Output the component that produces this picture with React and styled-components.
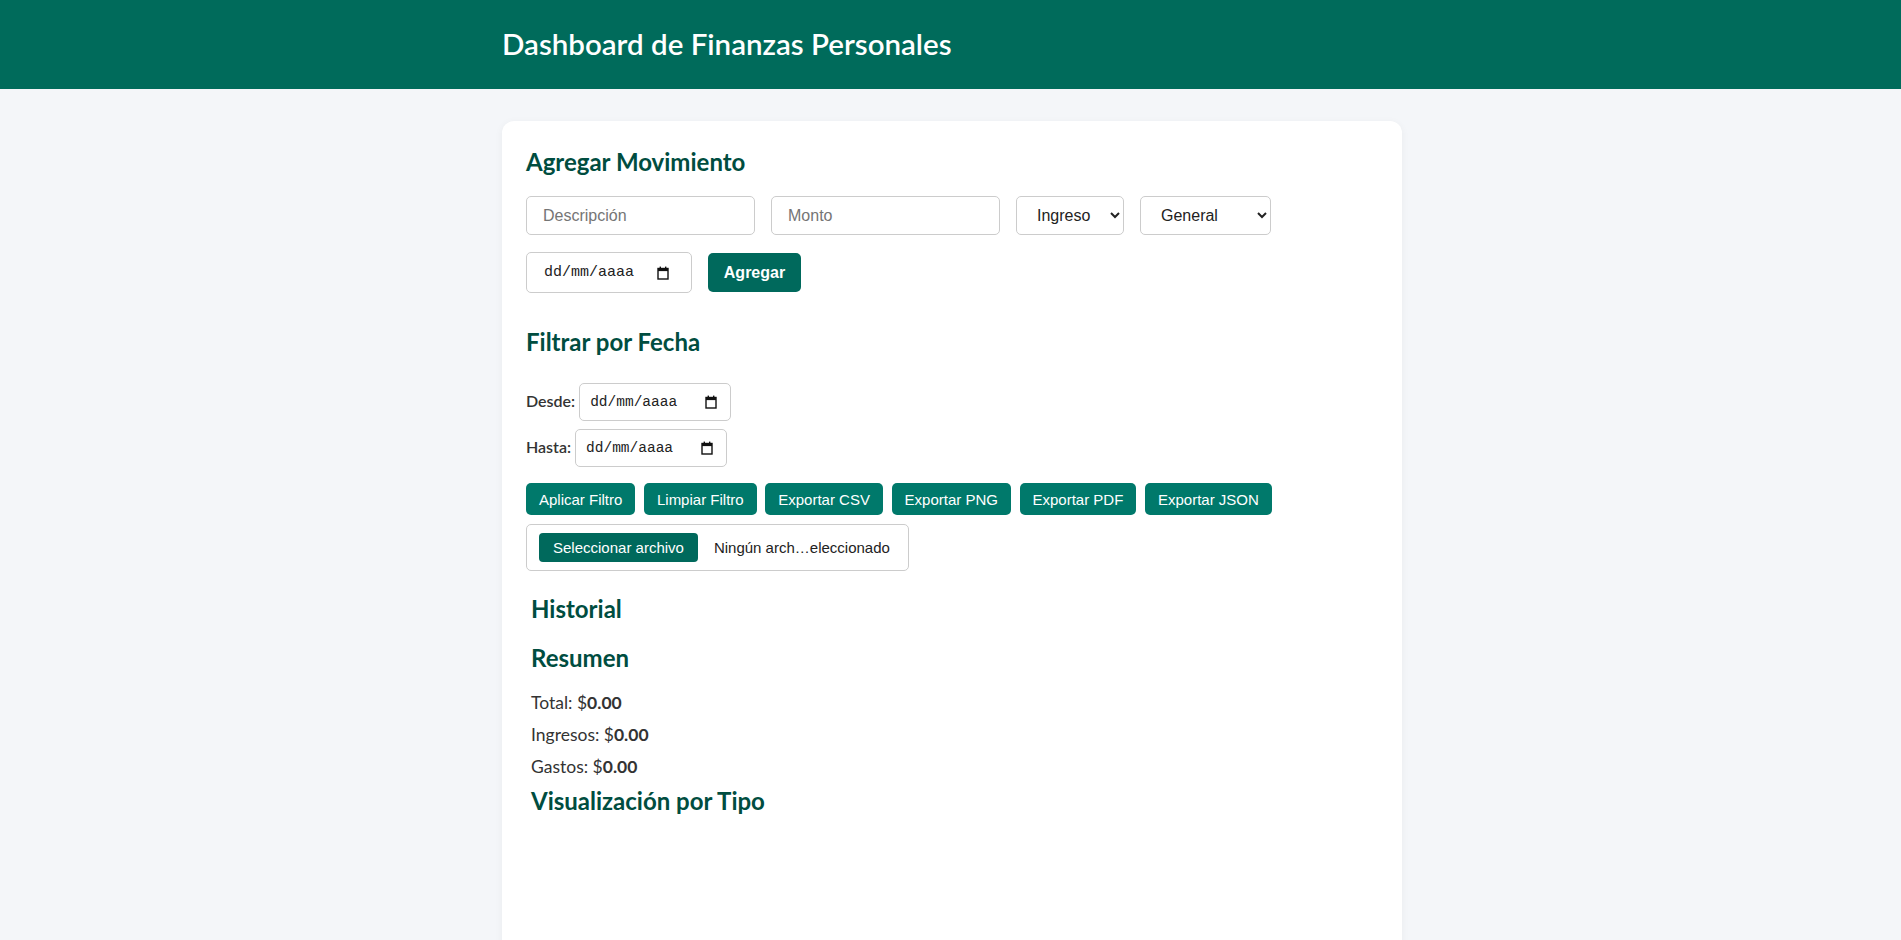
import React from "react";
import styled, {createGlobalStyle} from "styled-components";

const GlobalStyle = createGlobalStyle`
  body {
    margin: 0;
    background: #f4f6f9;
    font-family: "Segoe UI", Lato, "Noto Sans", sans-serif;
    color: #333;
  }
  * {
    box-sizing: border-box;
  }
`;

const CalendarIcon = () => (
  <svg width="12" height="14" viewBox="0 0 12 14">
    <rect x="1" y="2.5" width="10" height="10.5" fill="none" stroke="#111" strokeWidth="1.4"/>
    <rect x="1" y="2.5" width="10" height="2.6" fill="#111"/>
    <rect x="2.6" y="0.6" width="1.4" height="2.4" fill="#111"/>
    <rect x="8" y="0.6" width="1.4" height="2.4" fill="#111"/>
  </svg>
);

const DateField = ({wide}) => (
  <DateBox $wide={wide}>
    <span>dd/mm/aaaa</span>
    <CalendarIcon/>
  </DateBox>
);

const App = () => {
  return <>
    <GlobalStyle/>
    <Header>
      <HeaderInner>
        <Title>Dashboard de Finanzas Personales</Title>
      </HeaderInner>
    </Header>
    <Card>
      <SectionTitle>Agregar Movimiento</SectionTitle>
      <Form>
        <TextInput $width={229} placeholder="Descripción"/>
        <TextInput $width={229} placeholder="Monto"/>
        <Select $width={108} defaultValue="ingreso">
          <option value="ingreso">Ingreso</option>
          <option value="gasto">Gasto</option>
        </Select>
        <Select $width={131} defaultValue="general">
          <option value="general">General</option>
        </Select>
        <DateField wide/>
        <SubmitButton>Agregar</SubmitButton>
      </Form>

      <FilterTitle>Filtrar por Fecha</FilterTitle>
      <FilterRow>
        <Label>Desde:</Label>
        <DateField/>
      </FilterRow>
      <FilterRow>
        <Label>Hasta:</Label>
        <DateField/>
      </FilterRow>
      <Actions>
        <ActionButton>Aplicar Filtro</ActionButton>
        <ActionButton>Limpiar Filtro</ActionButton>
        <ActionButton>Exportar CSV</ActionButton>
        <ActionButton>Exportar PNG</ActionButton>
        <ActionButton>Exportar PDF</ActionButton>
        <ActionButton>Exportar JSON</ActionButton>
        <FileBox>
          <FileButton>Seleccionar archivo</FileButton>
          <FileName>Ningún arch…eleccionado</FileName>
        </FileBox>
      </Actions>

      <Section>
        <HistoryTitle>Historial</HistoryTitle>
        <SummaryTitle>Resumen</SummaryTitle>
        <SummaryLine>Total: $<b>0.00</b></SummaryLine>
        <SummaryLine>Ingresos: $<b>0.00</b></SummaryLine>
        <SummaryLine>Gastos: $<b>0.00</b></SummaryLine>
        <ChartTitle>Visualización por Tipo</ChartTitle>
        <ChartArea/>
      </Section>
    </Card>
  </>
};

const Header = styled.header`
  background: #006b5b;
  height: 89px;
  display: flex;
  align-items: center;
`;
const HeaderInner = styled.div`
  width: 900px;
  margin-left: calc(50% - 448.5px);
`;
const Title = styled.h1`
  margin: 0 0 2px;
  color: #fff;
  font-size: 29.5px;
  font-weight: 600;
`;
const Card = styled.main`
  width: 900px;
  margin: 32px 0 0 calc(50% - 448.5px);
  background: #fff;
  border-radius: 12px;
  box-shadow: 0 2px 8px rgba(0, 0, 0, 0.05);
  padding: 24px 24px 0;
`;
const SectionTitle = styled.h2`
  margin: 3px 0 20px;
  font-size: 24px;
  line-height: 28px;
  font-weight: 700;
  color: #004d40;
`;
const FilterTitle = styled(SectionTitle)`
  margin: 35px 0 27px;
`;
const Form = styled.div`
  display: flex;
  flex-wrap: wrap;
  align-items: center;
  gap: 17px 16px;
`;
const TextInput = styled.input`
  width: ${p => p.$width}px;
  height: 39px;
  padding: 0 16px;
  border: 1px solid #ccc;
  border-radius: 5px;
  font-family: "Liberation Sans", Arial, sans-serif;
  font-size: 16px;
  color: #222;
  &::placeholder {
    color: #757575;
  }
`;
const Select = styled.select`
  width: ${p => p.$width}px;
  height: 39px;
  padding: 0 12px 0 16px;
  border: 1px solid #ccc;
  border-radius: 5px;
  background: #fff;
  font-family: "Liberation Sans", Arial, sans-serif;
  font-size: 16px;
  color: #222;
`;
const DateBox = styled.div`
  display: inline-flex;
  align-items: center;
  justify-content: space-between;
  width: ${p => p.$wide ? 166 : 152}px;
  height: ${p => p.$wide ? 41 : 38}px;
  padding: ${p => p.$wide ? "0 22px 0 17px" : "0 13px 0 10px"};
  border: 1px solid #ccc;
  border-radius: 5px;
  background: #fff;
  font-family: "Liberation Mono", "DejaVu Sans Mono", monospace;
  font-size: ${p => p.$wide ? 15 : 14.5}px;
  color: #222;
`;
const SubmitButton = styled.button`
  width: 93px;
  height: 39px;
  border: none;
  border-radius: 5px;
  background: #00695c;
  color: #fff;
  font-family: "Liberation Sans", Arial, sans-serif;
  font-size: 16px;
  font-weight: bold;
`;
const FilterRow = styled.div`
  display: flex;
  align-items: center;
  gap: 4px;
  margin-bottom: 8px;
`;
const Label = styled.label`
  font-size: 16px;
  font-weight: 600;
  line-height: 20px;
  padding-bottom: 2px;
  color: #333;
`;
const Actions = styled.div`
  display: flex;
  flex-wrap: wrap;
  align-items: center;
  gap: 9px 8.6px;
  margin-top: 16px;
  padding-right: 100px;
`;
const ActionButton = styled.button`
  height: 32px;
  padding: 0 13px;
  border: none;
  border-radius: 5px;
  background: #00796b;
  color: #fff;
  font-family: "Liberation Sans", Arial, sans-serif;
  font-size: 15px;
`;
const FileBox = styled.div`
  display: flex;
  align-items: center;
  gap: 16px;
  width: 383px;
  height: 47px;
  padding: 0 12px;
  border: 1px solid #ccc;
  border-radius: 5px;
  font-family: "Liberation Sans", Arial, sans-serif;
  font-size: 15px;
`;
const FileButton = styled.button`
  height: 29px;
  padding: 0 14px;
  border: none;
  border-radius: 4px;
  background: #00695c;
  color: #fff;
  font-family: inherit;
  font-size: inherit;
`;
const FileName = styled.span`
  color: #222;
`;
const Section = styled.section`
  padding-left: 5px;
  margin-top: 24px;
`;
const HistoryTitle = styled(SectionTitle)`
  margin: 0 0 21px;
`;
const SummaryTitle = styled(SectionTitle)`
  margin: 0 0 19px;
`;
const SummaryLine = styled.p`
  margin: 0 0 8px;
  font-size: 17.5px;
  line-height: 24px;
  color: #333;
  b {
    font-weight: 700;
  }
`;
const ChartTitle = styled(SectionTitle)`
  margin: 0;
`;
const ChartArea = styled.div`
  height: 300px;
`;

export default App;
